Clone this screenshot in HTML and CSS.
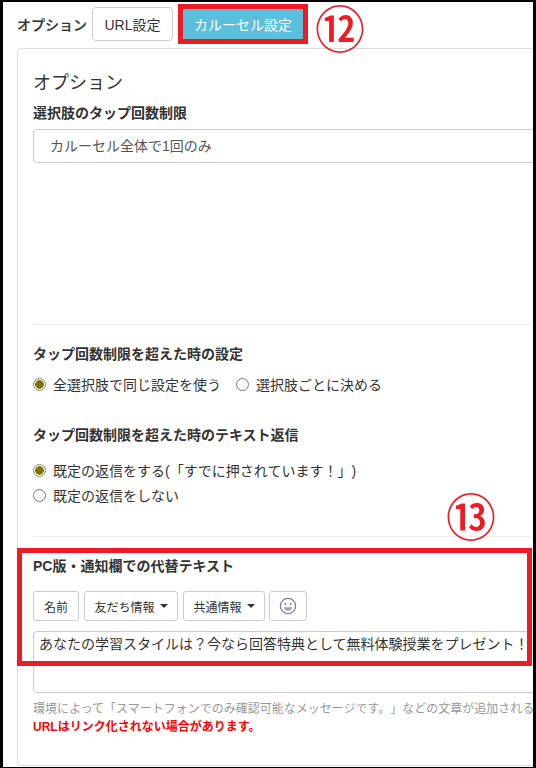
FILE: index.html
```html
<!DOCTYPE html>
<html lang="ja">
<head>
<meta charset="utf-8">
<title>オプション</title>
<link rel="stylesheet" href="styles.css">
</head>
<body>
<div class="app">
  <div class="tabs">
    <span class="tabs-label">オプション</span>
    <button class="btn btn-url">URL設定</button>
    <button class="btn btn-active">カルーセル設定</button>
  </div>
  <div class="panel">
    <h2 class="title">オプション</h2>
    <div class="label label-first">選択肢のタップ回数制限</div>
    <div class="select">カルーセル全体で1回のみ</div>
    <hr class="rule rule-1">
    <div class="label label-limit">タップ回数制限を超えた時の設定</div>
    <div class="radios radios-inline">
      <span class="radio-item"><i class="radio on"></i>全選択肢で同じ設定を使う</span>
      <span class="radio-item"><i class="radio"></i>選択肢ごとに決める</span>
    </div>
    <div class="label label-reply">タップ回数制限を超えた時のテキスト返信</div>
    <div class="radios radios-stack">
      <span class="radio-item"><i class="radio on"></i>既定の返信をする(「すでに押されています！」)</span>
      <span class="radio-item"><i class="radio"></i>既定の返信をしない</span>
    </div>
    <hr class="rule rule-2">
    <div class="label label-alt">PC版・通知欄での代替テキスト</div>
    <div class="toolbar">
      <button class="btn btn-sm btn-name">名前</button>
      <button class="btn btn-sm btn-friend">友だち情報<i class="caret"></i></button>
      <button class="btn btn-sm btn-common">共通情報<i class="caret"></i></button>
      <button class="btn btn-sm btn-emoji" aria-label="絵文字">
        <svg width="18" height="18" viewBox="0 0 18 18" fill="none">
          <circle cx="9" cy="9" r="7.6" stroke="#7c7f99" stroke-width="1.3"/>
          <circle cx="6.3" cy="7" r="1.1" fill="#7c7f99"/>
          <circle cx="11.7" cy="7" r="1.1" fill="#7c7f99"/>
          <path d="M5 10.3h8c0 2.1-1.8 3.5-4 3.5s-4-1.400-4-3.500z" fill="#9a9cb0"/>
        </svg>
      </button>
    </div>
    <div class="textarea">あなたの学習スタイルは？今なら回答特典として無料体験授業をプレゼント！</div>
    <p class="help">環境によって「スマートフォンでのみ確認可能なメッセージです。」などの文章が追加されることがあります。</p>
    <p class="warn">URLはリンク化されない場合があります。</p>
  </div>
  <div class="mark mark-tab"></div>
  <div class="mark mark-alt"></div>
  <span class="num num-12">⑫</span>
  <span class="num num-13">⑬</span>
</div>
</body>
</html>
```
FILE: styles.css
```css
* { box-sizing: border-box; }
html, body { margin: 0; height: 100%; }
body {
  background: #000;
  padding: 2px 3px 0;
  overflow: hidden;
  font-family: "Liberation Sans", "Noto Sans CJK JP", sans-serif;
  font-size: 14px;
  color: #333;
  text-spacing-trim: space-all;
}
.app {
  position: relative;
  width: 530px;
  height: 765px;
  background: #fff;
  overflow: hidden;
  padding: 5px 0 0 14px;
}
.tabs {
  display: flex;
  align-items: center;
  height: 34px;
}
.tabs-label { width: 75px; font-weight: 500; color: #333; -webkit-text-stroke: 0.2px #333; }
.btn {
  font: inherit;
  color: #333;
  background: #fff;
  border: 1px solid #ccc;
  border-radius: 4px;
  padding: 0;
  display: inline-flex;
  align-items: center;
  justify-content: center;
}
.btn-url { width: 81px; height: 34px; }
.btn-active {
  width: 120px;
  height: 30px;
  margin-left: 10px;
  background: #5bc0de;
  border-color: #5bc0de;
  border-radius: 0;
  color: #fff;
}
.panel {
  width: 600px;
  height: 718px;
  margin-top: 7px;
  padding: 0 15px;
  border: 1px solid #ddd;
  border-radius: 4px;
}
.title {
  margin: 22px 0 0;
  font-size: 18px;
  line-height: 24px;
  font-weight: 400;
  color: #333;
}
.label {
  font-weight: 700;
  line-height: 20px;
  color: #333;
}
.label-first { margin-top: 8px; }
.select {
  width: 560px;
  height: 34px;
  margin-top: 6px;
  padding-left: 16px;
  line-height: 32px;
  color: #555;
  border: 1px solid #ccc;
  border-radius: 4px;
}
.rule { margin: 0; border: 0; border-top: 1px solid #eee; width: 500px; }
.rule-1 { margin-top: 161px; }
.label-limit { margin-top: 19px; }
.radios { display: flex; color: #333; }
.radios-inline { margin-top: 10px; gap: 15px; height: 20px; }
.radios-stack { flex-direction: column; margin-top: 15px; gap: 5px; }
.radio-item { display: flex; align-items: center; height: 20px; white-space: nowrap; }
.radio {
  width: 13px;
  height: 13px;
  margin-right: 7px;
  border: 1px solid #767676;
  border-radius: 50%;
  background: #fff;
  flex: none;
}
.radio.on {
  border-color: #8a8a5c;
  background: radial-gradient(circle, #7f7300 0 4px, #fff 4.6px);
}
.label-reply { margin-top: 31px; }
.rule-2 { margin-top: 31px; }
.label-alt { margin-top: 19px; }
.toolbar { display: flex; margin-top: 15px; gap: 5px; }
.btn-sm { height: 30px; font-size: 12px; border-radius: 3px; }
.btn-name { width: 46px; }
.btn-friend { width: 94px; }
.btn-common { width: 82px; }
.btn-emoji { width: 38px; margin-left: -1px; }
.caret {
  margin-left: 5px;
  border-top: 4px solid #333;
  border-left: 4px solid transparent;
  border-right: 4px solid transparent;
}
.textarea {
  width: 560px;
  height: 62px;
  margin-top: 10px;
  padding: 2px 5px;
  line-height: 20px;
  white-space: nowrap;
  color: #333;
  border: 1px solid #ccc;
  border-radius: 4px;
}
.help {
  margin: 7px 0 0;
  font-size: 12px;
  line-height: 18px;
  white-space: nowrap;
  color: #999;
}
.warn {
  margin: 0;
  font-size: 12px;
  line-height: 18px;
  font-weight: 700;
  color: #f00;
}
.mark { position: absolute; border: 5px solid #ed1c24; pointer-events: none; }
.mark-tab { left: 175px; top: 2px; width: 130px; height: 40px; }
.mark-alt { left: 14px; top: 546px; width: 515px; height: 118px; }
.num {
  position: absolute;
  font-family: "Noto Sans CJK JP", sans-serif;
  font-size: 50px;
  line-height: 50px;
  color: #ed1c24;
  font-weight: 500;
}
.num-12 { left: 312px; top: -1px; }
.num-13 { left: 443px; top: 487px; }
```
